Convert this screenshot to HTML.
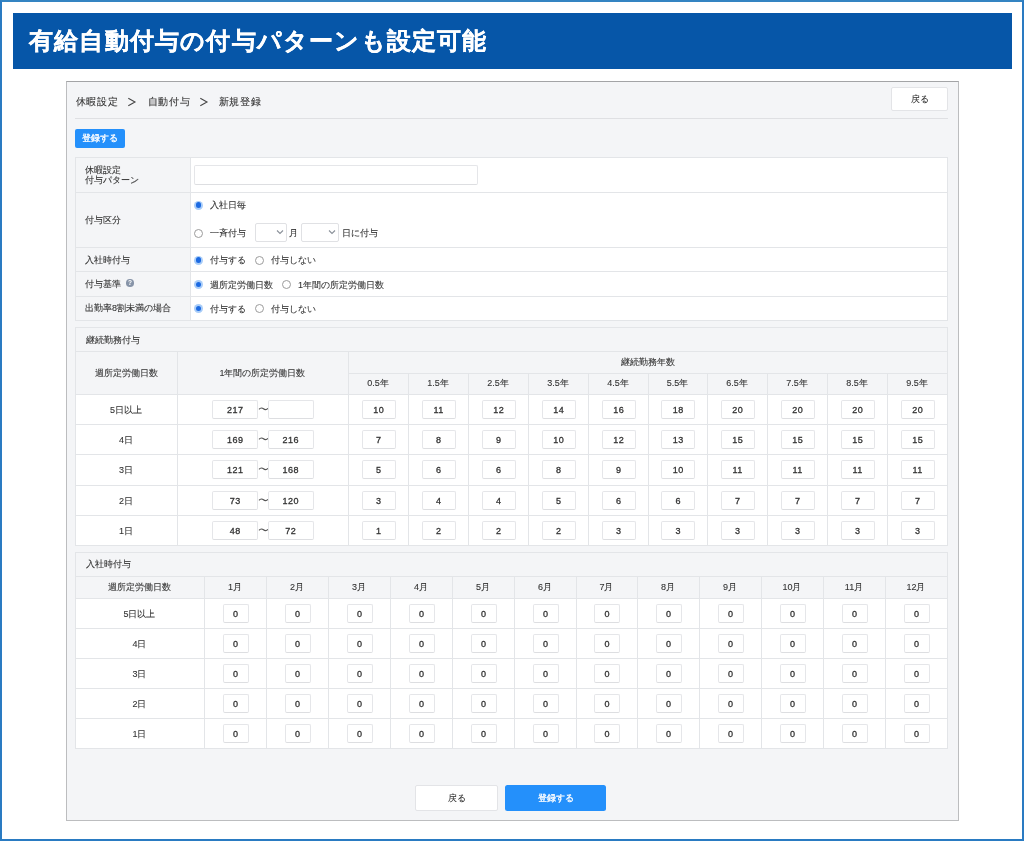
<!DOCTYPE html>
<html lang="ja"><head><meta charset="utf-8">
<style>
html,body{margin:0;padding:0;}
body{width:1024px;height:841px;position:relative;overflow:hidden;background:#fff;will-change:transform;font-family:"Liberation Sans",sans-serif;color:#333;}
.a{position:absolute;box-sizing:content-box;}
.t{white-space:nowrap;}
.inp{background:#fff;border:1px solid #e5e6e9;border-bottom-color:#dddee1;border-radius:2px;text-align:center;color:#333;letter-spacing:0.4px;text-indent:0.4px;-webkit-text-stroke:0.3px #333;}
.t{-webkit-text-stroke:0.1px currentColor;}
.rc{width:9px;height:9px;border-radius:50%;background:#a9cdf8;box-sizing:border-box;}
.rc:after{content:'';position:absolute;left:1.75px;top:1.75px;width:5.5px;height:5.5px;border-radius:50%;background:#1c6ae2;}
.ru{width:9px;height:9px;border-radius:50%;background:#fff;border:1px solid #9c9c9c;box-sizing:border-box;}
</style></head><body>

<div class="a" style="left:0;top:0;width:1024px;height:841px;box-sizing:border-box;border:2px solid #2a7bc2;border-top-color:#3484c2"></div>
<div class="a" style="left:13px;top:13px;width:999px;height:56px;background:#0656a8;border-radius:0px;"></div>
<div class="a t" style="left:29px;top:14px;width:600px;height:55px;line-height:55px;font-size:23.5px;font-weight:bold;color:#fff;text-align:left;-webkit-text-stroke:0.25px #fff;letter-spacing:1.2px">有給自動付与の付与パターンも設定可能</div>
<div class="a" style="left:66px;top:81px;width:891px;height:738px;background:#f4f5f7;border:1px solid #bcbdbf;border-radius:0px;border-top-color:#a3a4a6"></div>
<div class="a t" style="left:75.5px;top:92px;width:60px;height:20px;line-height:20px;font-size:9.7px;font-weight:normal;color:#333;text-align:left;letter-spacing:0.75px">休暇設定</div>
<svg class="a" style="left:127px;top:97px" width="10" height="10"><path d="M1.3 1.3 L8 5 L1.3 8.7" fill="none" stroke="#444" stroke-width="1.05"/></svg>
<div class="a t" style="left:147.5px;top:92px;width:60px;height:20px;line-height:20px;font-size:9.7px;font-weight:normal;color:#333;text-align:left;letter-spacing:0.75px">自動付与</div>
<svg class="a" style="left:199px;top:97px" width="10" height="10"><path d="M1.3 1.3 L8 5 L1.3 8.7" fill="none" stroke="#444" stroke-width="1.05"/></svg>
<div class="a t" style="left:218.5px;top:92px;width:60px;height:20px;line-height:20px;font-size:9.7px;font-weight:normal;color:#333;text-align:left;letter-spacing:0.75px">新規登録</div>
<div class="a" style="left:891px;top:87px;width:55px;height:22px;background:#fff;border:1px solid #e3e4e7;border-radius:2px;"></div>
<div class="a t" style="left:891px;top:87px;width:57px;height:24px;line-height:24px;font-size:9px;font-weight:normal;color:#333;text-align:center;">戻る</div>
<div class="a" style="left:75px;top:118px;width:873px;height:1px;background:#dfe0e3"></div>
<div class="a" style="left:75px;top:129px;width:50px;height:19px;background:#2490fb;border-radius:2px;"></div>
<div class="a t" style="left:75px;top:129px;width:50px;height:19px;line-height:19px;font-size:9px;font-weight:normal;color:#fff;text-align:center;-webkit-text-stroke:0.3px #fff">登録する</div>
<div class="a" style="left:75px;top:157px;width:872px;height:163px;background:#fff;border-radius:0px;"></div>
<div class="a" style="left:75px;top:157px;width:115px;height:163px;background:#f4f5f7;border-radius:0px;"></div>
<div class="a" style="left:75px;top:157px;width:873px;height:1px;background:#e3e5e8"></div>
<div class="a" style="left:75px;top:192px;width:873px;height:1px;background:#e3e5e8"></div>
<div class="a" style="left:75px;top:247px;width:873px;height:1px;background:#e3e5e8"></div>
<div class="a" style="left:75px;top:271px;width:873px;height:1px;background:#e3e5e8"></div>
<div class="a" style="left:75px;top:296px;width:873px;height:1px;background:#e3e5e8"></div>
<div class="a" style="left:75px;top:320px;width:873px;height:1px;background:#e3e5e8"></div>
<div class="a" style="left:75px;top:157px;width:1px;height:163px;background:#e3e5e8"></div>
<div class="a" style="left:947px;top:157px;width:1px;height:163px;background:#e3e5e8"></div>
<div class="a" style="left:190px;top:157px;width:1px;height:163px;background:#e3e5e8"></div>
<div class="a t" style="left:85px;top:165px;width:100px;height:10px;line-height:10px;font-size:9px;font-weight:normal;color:#333;text-align:left;">休暇設定</div>
<div class="a t" style="left:85px;top:175px;width:100px;height:10px;line-height:10px;font-size:9px;font-weight:normal;color:#333;text-align:left;">付与パターン</div>
<div class="a t" style="left:85px;top:214px;width:100px;height:12px;line-height:12px;font-size:9px;font-weight:normal;color:#333;text-align:left;">付与区分</div>
<div class="a t" style="left:85px;top:254px;width:100px;height:12px;line-height:12px;font-size:9px;font-weight:normal;color:#333;text-align:left;">入社時付与</div>
<div class="a t" style="left:85px;top:278px;width:100px;height:12px;line-height:12px;font-size:9px;font-weight:normal;color:#333;text-align:left;">付与基準</div>
<div class="a" style="left:126.3px;top:279.1px;width:7.6px;height:7.6px;border-radius:50%;background:#8794a8;color:#fff;font-size:6.5px;line-height:7.6px;text-align:center;font-weight:bold">?</div>
<div class="a t" style="left:85px;top:302px;width:120px;height:12px;line-height:12px;font-size:9px;font-weight:normal;color:#333;text-align:left;">出勤率8割未満の場合</div>
<div class="a inp" style="left:194px;top:165px;width:282px;height:18px;line-height:20px;font-size:9px"></div>
<div class="a rc" style="left:194.0px;top:200.5px"></div>
<div class="a t" style="left:210px;top:199px;width:60px;height:12px;line-height:12px;font-size:9px;font-weight:normal;color:#333;text-align:left;">入社日毎</div>
<div class="a ru" style="left:194.0px;top:228.5px"></div>
<div class="a t" style="left:210px;top:227px;width:60px;height:12px;line-height:12px;font-size:9px;font-weight:normal;color:#333;text-align:left;">一斉付与</div>
<div class="a" style="left:255px;top:223px;width:30px;height:17px;background:#fff;border:1px solid #e0e1e4;border-radius:2px;"></div>
<div class="a" style="left:301px;top:223px;width:36px;height:17px;background:#fff;border:1px solid #e0e1e4;border-radius:2px;"></div>
<svg class="a" style="left:276px;top:229px" width="8" height="6"><path d="M1 1.5 L4 4.5 L7 1.5" fill="none" stroke="#8a9099" stroke-width="1.1"/></svg>
<svg class="a" style="left:328px;top:229px" width="8" height="6"><path d="M1 1.5 L4 4.5 L7 1.5" fill="none" stroke="#8a9099" stroke-width="1.1"/></svg>
<div class="a t" style="left:289px;top:227px;width:12px;height:12px;line-height:12px;font-size:9px;font-weight:normal;color:#333;text-align:left;">月</div>
<div class="a t" style="left:342px;top:227px;width:50px;height:12px;line-height:12px;font-size:9px;font-weight:normal;color:#333;text-align:left;">日に付与</div>
<div class="a rc" style="left:194.0px;top:255.5px"></div>
<div class="a t" style="left:210px;top:254px;width:60px;height:12px;line-height:12px;font-size:9px;font-weight:normal;color:#333;text-align:left;">付与する</div>
<div class="a ru" style="left:255.0px;top:255.5px"></div>
<div class="a t" style="left:270.5px;top:254px;width:60px;height:12px;line-height:12px;font-size:9px;font-weight:normal;color:#333;text-align:left;">付与しない</div>
<div class="a rc" style="left:194.0px;top:280.0px"></div>
<div class="a t" style="left:210px;top:278.5px;width:80px;height:12px;line-height:12px;font-size:9px;font-weight:normal;color:#333;text-align:left;">週所定労働日数</div>
<div class="a ru" style="left:281.5px;top:280.0px"></div>
<div class="a t" style="left:298px;top:278.5px;width:100px;height:12px;line-height:12px;font-size:9px;font-weight:normal;color:#333;text-align:left;">1年間の所定労働日数</div>
<div class="a rc" style="left:194.0px;top:304.0px"></div>
<div class="a t" style="left:210px;top:302.5px;width:60px;height:12px;line-height:12px;font-size:9px;font-weight:normal;color:#333;text-align:left;">付与する</div>
<div class="a ru" style="left:255.0px;top:304.0px"></div>
<div class="a t" style="left:270.5px;top:302.5px;width:60px;height:12px;line-height:12px;font-size:9px;font-weight:normal;color:#333;text-align:left;">付与しない</div>
<div class="a" style="left:75px;top:327px;width:872px;height:218px;background:#fff;border-radius:0px;"></div>
<div class="a" style="left:75px;top:327px;width:872px;height:67px;background:#f4f5f7;border-radius:0px;"></div>
<div class="a" style="left:75px;top:327px;width:873px;height:1px;background:#e3e5e8"></div>
<div class="a" style="left:75px;top:351px;width:873px;height:1px;background:#e3e5e8"></div>
<div class="a" style="left:348px;top:373px;width:600px;height:1px;background:#e3e5e8"></div>
<div class="a" style="left:75px;top:394px;width:873px;height:1px;background:#e3e5e8"></div>
<div class="a" style="left:75px;top:424px;width:873px;height:1px;background:#e3e5e8"></div>
<div class="a" style="left:75px;top:454px;width:873px;height:1px;background:#e3e5e8"></div>
<div class="a" style="left:75px;top:485px;width:873px;height:1px;background:#e3e5e8"></div>
<div class="a" style="left:75px;top:515px;width:873px;height:1px;background:#e3e5e8"></div>
<div class="a" style="left:75px;top:545px;width:873px;height:1px;background:#e3e5e8"></div>
<div class="a" style="left:75px;top:327px;width:1px;height:218px;background:#e3e5e8"></div>
<div class="a" style="left:947px;top:327px;width:1px;height:218px;background:#e3e5e8"></div>
<div class="a" style="left:177px;top:351px;width:1px;height:194px;background:#e3e5e8"></div>
<div class="a" style="left:348px;top:351px;width:1px;height:194px;background:#e3e5e8"></div>
<div class="a" style="left:408px;top:373px;width:1px;height:172px;background:#e3e5e8"></div>
<div class="a" style="left:468px;top:373px;width:1px;height:172px;background:#e3e5e8"></div>
<div class="a" style="left:528px;top:373px;width:1px;height:172px;background:#e3e5e8"></div>
<div class="a" style="left:588px;top:373px;width:1px;height:172px;background:#e3e5e8"></div>
<div class="a" style="left:648px;top:373px;width:1px;height:172px;background:#e3e5e8"></div>
<div class="a" style="left:707px;top:373px;width:1px;height:172px;background:#e3e5e8"></div>
<div class="a" style="left:767px;top:373px;width:1px;height:172px;background:#e3e5e8"></div>
<div class="a" style="left:827px;top:373px;width:1px;height:172px;background:#e3e5e8"></div>
<div class="a" style="left:887px;top:373px;width:1px;height:172px;background:#e3e5e8"></div>
<div class="a t" style="left:86px;top:334px;width:100px;height:12px;line-height:12px;font-size:9px;font-weight:normal;color:#333;text-align:left;">継続勤務付与</div>
<div class="a t" style="left:75px;top:352px;width:102px;height:43px;line-height:43px;font-size:9px;font-weight:normal;color:#333;text-align:center;">週所定労働日数</div>
<div class="a t" style="left:177px;top:352px;width:171px;height:43px;line-height:43px;font-size:9px;font-weight:normal;color:#333;text-align:center;">1年間の所定労働日数</div>
<div class="a t" style="left:348px;top:351px;width:599px;height:22px;line-height:22px;font-size:9px;font-weight:normal;color:#333;text-align:center;">継続勤務年数</div>
<div class="a t" style="left:348px;top:373px;width:60px;height:21px;line-height:21px;font-size:9px;font-weight:normal;color:#333;text-align:center;">0.5年</div>
<div class="a t" style="left:408px;top:373px;width:60px;height:21px;line-height:21px;font-size:9px;font-weight:normal;color:#333;text-align:center;">1.5年</div>
<div class="a t" style="left:468px;top:373px;width:60px;height:21px;line-height:21px;font-size:9px;font-weight:normal;color:#333;text-align:center;">2.5年</div>
<div class="a t" style="left:528px;top:373px;width:60px;height:21px;line-height:21px;font-size:9px;font-weight:normal;color:#333;text-align:center;">3.5年</div>
<div class="a t" style="left:588px;top:373px;width:60px;height:21px;line-height:21px;font-size:9px;font-weight:normal;color:#333;text-align:center;">4.5年</div>
<div class="a t" style="left:648px;top:373px;width:59px;height:21px;line-height:21px;font-size:9px;font-weight:normal;color:#333;text-align:center;">5.5年</div>
<div class="a t" style="left:707px;top:373px;width:60px;height:21px;line-height:21px;font-size:9px;font-weight:normal;color:#333;text-align:center;">6.5年</div>
<div class="a t" style="left:767px;top:373px;width:60px;height:21px;line-height:21px;font-size:9px;font-weight:normal;color:#333;text-align:center;">7.5年</div>
<div class="a t" style="left:827px;top:373px;width:60px;height:21px;line-height:21px;font-size:9px;font-weight:normal;color:#333;text-align:center;">8.5年</div>
<div class="a t" style="left:887px;top:373px;width:60px;height:21px;line-height:21px;font-size:9px;font-weight:normal;color:#333;text-align:center;">9.5年</div>
<div class="a t" style="left:75px;top:395px;width:102px;height:30px;line-height:30px;font-size:9px;font-weight:normal;color:#333;text-align:center;">5日以上</div>
<div class="a inp" style="left:212px;top:400px;width:44px;height:17px;line-height:19px;font-size:9px">217</div>
<div class="a t" style="left:257.5px;top:393.5px;width:11px;height:30px;line-height:30px;font-size:10.5px;font-weight:normal;color:#555;text-align:center;-webkit-text-stroke:0">〜</div>
<div class="a inp" style="left:267.5px;top:400px;width:44px;height:17px;line-height:19px;font-size:9px"></div>
<div class="a inp" style="left:361.5px;top:400px;width:32px;height:17px;line-height:19px;font-size:9px">10</div>
<div class="a inp" style="left:421.5px;top:400px;width:32px;height:17px;line-height:19px;font-size:9px">11</div>
<div class="a inp" style="left:481.5px;top:400px;width:32px;height:17px;line-height:19px;font-size:9px">12</div>
<div class="a inp" style="left:541.5px;top:400px;width:32px;height:17px;line-height:19px;font-size:9px">14</div>
<div class="a inp" style="left:601.5px;top:400px;width:32px;height:17px;line-height:19px;font-size:9px">16</div>
<div class="a inp" style="left:661.0px;top:400px;width:32px;height:17px;line-height:19px;font-size:9px">18</div>
<div class="a inp" style="left:720.5px;top:400px;width:32px;height:17px;line-height:19px;font-size:9px">20</div>
<div class="a inp" style="left:780.5px;top:400px;width:32px;height:17px;line-height:19px;font-size:9px">20</div>
<div class="a inp" style="left:840.5px;top:400px;width:32px;height:17px;line-height:19px;font-size:9px">20</div>
<div class="a inp" style="left:900.5px;top:400px;width:32px;height:17px;line-height:19px;font-size:9px">20</div>
<div class="a t" style="left:75px;top:425px;width:102px;height:30px;line-height:30px;font-size:9px;font-weight:normal;color:#333;text-align:center;">4日</div>
<div class="a inp" style="left:212px;top:430px;width:44px;height:17px;line-height:19px;font-size:9px">169</div>
<div class="a t" style="left:257.5px;top:423.5px;width:11px;height:30px;line-height:30px;font-size:10.5px;font-weight:normal;color:#555;text-align:center;-webkit-text-stroke:0">〜</div>
<div class="a inp" style="left:267.5px;top:430px;width:44px;height:17px;line-height:19px;font-size:9px">216</div>
<div class="a inp" style="left:361.5px;top:430px;width:32px;height:17px;line-height:19px;font-size:9px">7</div>
<div class="a inp" style="left:421.5px;top:430px;width:32px;height:17px;line-height:19px;font-size:9px">8</div>
<div class="a inp" style="left:481.5px;top:430px;width:32px;height:17px;line-height:19px;font-size:9px">9</div>
<div class="a inp" style="left:541.5px;top:430px;width:32px;height:17px;line-height:19px;font-size:9px">10</div>
<div class="a inp" style="left:601.5px;top:430px;width:32px;height:17px;line-height:19px;font-size:9px">12</div>
<div class="a inp" style="left:661.0px;top:430px;width:32px;height:17px;line-height:19px;font-size:9px">13</div>
<div class="a inp" style="left:720.5px;top:430px;width:32px;height:17px;line-height:19px;font-size:9px">15</div>
<div class="a inp" style="left:780.5px;top:430px;width:32px;height:17px;line-height:19px;font-size:9px">15</div>
<div class="a inp" style="left:840.5px;top:430px;width:32px;height:17px;line-height:19px;font-size:9px">15</div>
<div class="a inp" style="left:900.5px;top:430px;width:32px;height:17px;line-height:19px;font-size:9px">15</div>
<div class="a t" style="left:75px;top:455px;width:102px;height:30px;line-height:30px;font-size:9px;font-weight:normal;color:#333;text-align:center;">3日</div>
<div class="a inp" style="left:212px;top:460px;width:44px;height:17px;line-height:19px;font-size:9px">121</div>
<div class="a t" style="left:257.5px;top:453.5px;width:11px;height:30px;line-height:30px;font-size:10.5px;font-weight:normal;color:#555;text-align:center;-webkit-text-stroke:0">〜</div>
<div class="a inp" style="left:267.5px;top:460px;width:44px;height:17px;line-height:19px;font-size:9px">168</div>
<div class="a inp" style="left:361.5px;top:460px;width:32px;height:17px;line-height:19px;font-size:9px">5</div>
<div class="a inp" style="left:421.5px;top:460px;width:32px;height:17px;line-height:19px;font-size:9px">6</div>
<div class="a inp" style="left:481.5px;top:460px;width:32px;height:17px;line-height:19px;font-size:9px">6</div>
<div class="a inp" style="left:541.5px;top:460px;width:32px;height:17px;line-height:19px;font-size:9px">8</div>
<div class="a inp" style="left:601.5px;top:460px;width:32px;height:17px;line-height:19px;font-size:9px">9</div>
<div class="a inp" style="left:661.0px;top:460px;width:32px;height:17px;line-height:19px;font-size:9px">10</div>
<div class="a inp" style="left:720.5px;top:460px;width:32px;height:17px;line-height:19px;font-size:9px">11</div>
<div class="a inp" style="left:780.5px;top:460px;width:32px;height:17px;line-height:19px;font-size:9px">11</div>
<div class="a inp" style="left:840.5px;top:460px;width:32px;height:17px;line-height:19px;font-size:9px">11</div>
<div class="a inp" style="left:900.5px;top:460px;width:32px;height:17px;line-height:19px;font-size:9px">11</div>
<div class="a t" style="left:75px;top:486px;width:102px;height:30px;line-height:30px;font-size:9px;font-weight:normal;color:#333;text-align:center;">2日</div>
<div class="a inp" style="left:212px;top:491px;width:44px;height:17px;line-height:19px;font-size:9px">73</div>
<div class="a t" style="left:257.5px;top:484.5px;width:11px;height:30px;line-height:30px;font-size:10.5px;font-weight:normal;color:#555;text-align:center;-webkit-text-stroke:0">〜</div>
<div class="a inp" style="left:267.5px;top:491px;width:44px;height:17px;line-height:19px;font-size:9px">120</div>
<div class="a inp" style="left:361.5px;top:491px;width:32px;height:17px;line-height:19px;font-size:9px">3</div>
<div class="a inp" style="left:421.5px;top:491px;width:32px;height:17px;line-height:19px;font-size:9px">4</div>
<div class="a inp" style="left:481.5px;top:491px;width:32px;height:17px;line-height:19px;font-size:9px">4</div>
<div class="a inp" style="left:541.5px;top:491px;width:32px;height:17px;line-height:19px;font-size:9px">5</div>
<div class="a inp" style="left:601.5px;top:491px;width:32px;height:17px;line-height:19px;font-size:9px">6</div>
<div class="a inp" style="left:661.0px;top:491px;width:32px;height:17px;line-height:19px;font-size:9px">6</div>
<div class="a inp" style="left:720.5px;top:491px;width:32px;height:17px;line-height:19px;font-size:9px">7</div>
<div class="a inp" style="left:780.5px;top:491px;width:32px;height:17px;line-height:19px;font-size:9px">7</div>
<div class="a inp" style="left:840.5px;top:491px;width:32px;height:17px;line-height:19px;font-size:9px">7</div>
<div class="a inp" style="left:900.5px;top:491px;width:32px;height:17px;line-height:19px;font-size:9px">7</div>
<div class="a t" style="left:75px;top:516px;width:102px;height:30px;line-height:30px;font-size:9px;font-weight:normal;color:#333;text-align:center;">1日</div>
<div class="a inp" style="left:212px;top:521px;width:44px;height:17px;line-height:19px;font-size:9px">48</div>
<div class="a t" style="left:257.5px;top:514.5px;width:11px;height:30px;line-height:30px;font-size:10.5px;font-weight:normal;color:#555;text-align:center;-webkit-text-stroke:0">〜</div>
<div class="a inp" style="left:267.5px;top:521px;width:44px;height:17px;line-height:19px;font-size:9px">72</div>
<div class="a inp" style="left:361.5px;top:521px;width:32px;height:17px;line-height:19px;font-size:9px">1</div>
<div class="a inp" style="left:421.5px;top:521px;width:32px;height:17px;line-height:19px;font-size:9px">2</div>
<div class="a inp" style="left:481.5px;top:521px;width:32px;height:17px;line-height:19px;font-size:9px">2</div>
<div class="a inp" style="left:541.5px;top:521px;width:32px;height:17px;line-height:19px;font-size:9px">2</div>
<div class="a inp" style="left:601.5px;top:521px;width:32px;height:17px;line-height:19px;font-size:9px">3</div>
<div class="a inp" style="left:661.0px;top:521px;width:32px;height:17px;line-height:19px;font-size:9px">3</div>
<div class="a inp" style="left:720.5px;top:521px;width:32px;height:17px;line-height:19px;font-size:9px">3</div>
<div class="a inp" style="left:780.5px;top:521px;width:32px;height:17px;line-height:19px;font-size:9px">3</div>
<div class="a inp" style="left:840.5px;top:521px;width:32px;height:17px;line-height:19px;font-size:9px">3</div>
<div class="a inp" style="left:900.5px;top:521px;width:32px;height:17px;line-height:19px;font-size:9px">3</div>
<div class="a" style="left:75px;top:552px;width:872px;height:196px;background:#fff;border-radius:0px;"></div>
<div class="a" style="left:75px;top:552px;width:872px;height:46px;background:#f4f5f7;border-radius:0px;"></div>
<div class="a" style="left:75px;top:552px;width:873px;height:1px;background:#e3e5e8"></div>
<div class="a" style="left:75px;top:576px;width:873px;height:1px;background:#e3e5e8"></div>
<div class="a" style="left:75px;top:598px;width:873px;height:1px;background:#e3e5e8"></div>
<div class="a" style="left:75px;top:628px;width:873px;height:1px;background:#e3e5e8"></div>
<div class="a" style="left:75px;top:658px;width:873px;height:1px;background:#e3e5e8"></div>
<div class="a" style="left:75px;top:688px;width:873px;height:1px;background:#e3e5e8"></div>
<div class="a" style="left:75px;top:718px;width:873px;height:1px;background:#e3e5e8"></div>
<div class="a" style="left:75px;top:748px;width:873px;height:1px;background:#e3e5e8"></div>
<div class="a" style="left:75px;top:552px;width:1px;height:196px;background:#e3e5e8"></div>
<div class="a" style="left:947px;top:552px;width:1px;height:196px;background:#e3e5e8"></div>
<div class="a" style="left:204px;top:576px;width:1px;height:172px;background:#e3e5e8"></div>
<div class="a" style="left:266px;top:576px;width:1px;height:172px;background:#e3e5e8"></div>
<div class="a" style="left:328px;top:576px;width:1px;height:172px;background:#e3e5e8"></div>
<div class="a" style="left:390px;top:576px;width:1px;height:172px;background:#e3e5e8"></div>
<div class="a" style="left:452px;top:576px;width:1px;height:172px;background:#e3e5e8"></div>
<div class="a" style="left:514px;top:576px;width:1px;height:172px;background:#e3e5e8"></div>
<div class="a" style="left:576px;top:576px;width:1px;height:172px;background:#e3e5e8"></div>
<div class="a" style="left:637px;top:576px;width:1px;height:172px;background:#e3e5e8"></div>
<div class="a" style="left:699px;top:576px;width:1px;height:172px;background:#e3e5e8"></div>
<div class="a" style="left:761px;top:576px;width:1px;height:172px;background:#e3e5e8"></div>
<div class="a" style="left:823px;top:576px;width:1px;height:172px;background:#e3e5e8"></div>
<div class="a" style="left:885px;top:576px;width:1px;height:172px;background:#e3e5e8"></div>
<div class="a t" style="left:86px;top:558px;width:100px;height:12px;line-height:12px;font-size:9px;font-weight:normal;color:#333;text-align:left;">入社時付与</div>
<div class="a t" style="left:75px;top:576px;width:129px;height:22px;line-height:22px;font-size:9px;font-weight:normal;color:#333;text-align:center;">週所定労働日数</div>
<div class="a t" style="left:204px;top:576px;width:62px;height:22px;line-height:22px;font-size:9px;font-weight:normal;color:#333;text-align:center;">1月</div>
<div class="a t" style="left:266px;top:576px;width:62px;height:22px;line-height:22px;font-size:9px;font-weight:normal;color:#333;text-align:center;">2月</div>
<div class="a t" style="left:328px;top:576px;width:62px;height:22px;line-height:22px;font-size:9px;font-weight:normal;color:#333;text-align:center;">3月</div>
<div class="a t" style="left:390px;top:576px;width:62px;height:22px;line-height:22px;font-size:9px;font-weight:normal;color:#333;text-align:center;">4月</div>
<div class="a t" style="left:452px;top:576px;width:62px;height:22px;line-height:22px;font-size:9px;font-weight:normal;color:#333;text-align:center;">5月</div>
<div class="a t" style="left:514px;top:576px;width:62px;height:22px;line-height:22px;font-size:9px;font-weight:normal;color:#333;text-align:center;">6月</div>
<div class="a t" style="left:576px;top:576px;width:61px;height:22px;line-height:22px;font-size:9px;font-weight:normal;color:#333;text-align:center;">7月</div>
<div class="a t" style="left:637px;top:576px;width:62px;height:22px;line-height:22px;font-size:9px;font-weight:normal;color:#333;text-align:center;">8月</div>
<div class="a t" style="left:699px;top:576px;width:62px;height:22px;line-height:22px;font-size:9px;font-weight:normal;color:#333;text-align:center;">9月</div>
<div class="a t" style="left:761px;top:576px;width:62px;height:22px;line-height:22px;font-size:9px;font-weight:normal;color:#333;text-align:center;">10月</div>
<div class="a t" style="left:823px;top:576px;width:62px;height:22px;line-height:22px;font-size:9px;font-weight:normal;color:#333;text-align:center;">11月</div>
<div class="a t" style="left:885px;top:576px;width:62px;height:22px;line-height:22px;font-size:9px;font-weight:normal;color:#333;text-align:center;">12月</div>
<div class="a t" style="left:75px;top:599px;width:129px;height:30px;line-height:30px;font-size:9px;font-weight:normal;color:#333;text-align:center;">5日以上</div>
<div class="a inp" style="left:222.5px;top:604px;width:24px;height:17px;line-height:19px;font-size:9px">0</div>
<div class="a inp" style="left:284.5px;top:604px;width:24px;height:17px;line-height:19px;font-size:9px">0</div>
<div class="a inp" style="left:346.5px;top:604px;width:24px;height:17px;line-height:19px;font-size:9px">0</div>
<div class="a inp" style="left:408.5px;top:604px;width:24px;height:17px;line-height:19px;font-size:9px">0</div>
<div class="a inp" style="left:470.5px;top:604px;width:24px;height:17px;line-height:19px;font-size:9px">0</div>
<div class="a inp" style="left:532.5px;top:604px;width:24px;height:17px;line-height:19px;font-size:9px">0</div>
<div class="a inp" style="left:594.0px;top:604px;width:24px;height:17px;line-height:19px;font-size:9px">0</div>
<div class="a inp" style="left:655.5px;top:604px;width:24px;height:17px;line-height:19px;font-size:9px">0</div>
<div class="a inp" style="left:717.5px;top:604px;width:24px;height:17px;line-height:19px;font-size:9px">0</div>
<div class="a inp" style="left:779.5px;top:604px;width:24px;height:17px;line-height:19px;font-size:9px">0</div>
<div class="a inp" style="left:841.5px;top:604px;width:24px;height:17px;line-height:19px;font-size:9px">0</div>
<div class="a inp" style="left:903.5px;top:604px;width:24px;height:17px;line-height:19px;font-size:9px">0</div>
<div class="a t" style="left:75px;top:629px;width:129px;height:30px;line-height:30px;font-size:9px;font-weight:normal;color:#333;text-align:center;">4日</div>
<div class="a inp" style="left:222.5px;top:634px;width:24px;height:17px;line-height:19px;font-size:9px">0</div>
<div class="a inp" style="left:284.5px;top:634px;width:24px;height:17px;line-height:19px;font-size:9px">0</div>
<div class="a inp" style="left:346.5px;top:634px;width:24px;height:17px;line-height:19px;font-size:9px">0</div>
<div class="a inp" style="left:408.5px;top:634px;width:24px;height:17px;line-height:19px;font-size:9px">0</div>
<div class="a inp" style="left:470.5px;top:634px;width:24px;height:17px;line-height:19px;font-size:9px">0</div>
<div class="a inp" style="left:532.5px;top:634px;width:24px;height:17px;line-height:19px;font-size:9px">0</div>
<div class="a inp" style="left:594.0px;top:634px;width:24px;height:17px;line-height:19px;font-size:9px">0</div>
<div class="a inp" style="left:655.5px;top:634px;width:24px;height:17px;line-height:19px;font-size:9px">0</div>
<div class="a inp" style="left:717.5px;top:634px;width:24px;height:17px;line-height:19px;font-size:9px">0</div>
<div class="a inp" style="left:779.5px;top:634px;width:24px;height:17px;line-height:19px;font-size:9px">0</div>
<div class="a inp" style="left:841.5px;top:634px;width:24px;height:17px;line-height:19px;font-size:9px">0</div>
<div class="a inp" style="left:903.5px;top:634px;width:24px;height:17px;line-height:19px;font-size:9px">0</div>
<div class="a t" style="left:75px;top:659px;width:129px;height:30px;line-height:30px;font-size:9px;font-weight:normal;color:#333;text-align:center;">3日</div>
<div class="a inp" style="left:222.5px;top:664px;width:24px;height:17px;line-height:19px;font-size:9px">0</div>
<div class="a inp" style="left:284.5px;top:664px;width:24px;height:17px;line-height:19px;font-size:9px">0</div>
<div class="a inp" style="left:346.5px;top:664px;width:24px;height:17px;line-height:19px;font-size:9px">0</div>
<div class="a inp" style="left:408.5px;top:664px;width:24px;height:17px;line-height:19px;font-size:9px">0</div>
<div class="a inp" style="left:470.5px;top:664px;width:24px;height:17px;line-height:19px;font-size:9px">0</div>
<div class="a inp" style="left:532.5px;top:664px;width:24px;height:17px;line-height:19px;font-size:9px">0</div>
<div class="a inp" style="left:594.0px;top:664px;width:24px;height:17px;line-height:19px;font-size:9px">0</div>
<div class="a inp" style="left:655.5px;top:664px;width:24px;height:17px;line-height:19px;font-size:9px">0</div>
<div class="a inp" style="left:717.5px;top:664px;width:24px;height:17px;line-height:19px;font-size:9px">0</div>
<div class="a inp" style="left:779.5px;top:664px;width:24px;height:17px;line-height:19px;font-size:9px">0</div>
<div class="a inp" style="left:841.5px;top:664px;width:24px;height:17px;line-height:19px;font-size:9px">0</div>
<div class="a inp" style="left:903.5px;top:664px;width:24px;height:17px;line-height:19px;font-size:9px">0</div>
<div class="a t" style="left:75px;top:689px;width:129px;height:30px;line-height:30px;font-size:9px;font-weight:normal;color:#333;text-align:center;">2日</div>
<div class="a inp" style="left:222.5px;top:694px;width:24px;height:17px;line-height:19px;font-size:9px">0</div>
<div class="a inp" style="left:284.5px;top:694px;width:24px;height:17px;line-height:19px;font-size:9px">0</div>
<div class="a inp" style="left:346.5px;top:694px;width:24px;height:17px;line-height:19px;font-size:9px">0</div>
<div class="a inp" style="left:408.5px;top:694px;width:24px;height:17px;line-height:19px;font-size:9px">0</div>
<div class="a inp" style="left:470.5px;top:694px;width:24px;height:17px;line-height:19px;font-size:9px">0</div>
<div class="a inp" style="left:532.5px;top:694px;width:24px;height:17px;line-height:19px;font-size:9px">0</div>
<div class="a inp" style="left:594.0px;top:694px;width:24px;height:17px;line-height:19px;font-size:9px">0</div>
<div class="a inp" style="left:655.5px;top:694px;width:24px;height:17px;line-height:19px;font-size:9px">0</div>
<div class="a inp" style="left:717.5px;top:694px;width:24px;height:17px;line-height:19px;font-size:9px">0</div>
<div class="a inp" style="left:779.5px;top:694px;width:24px;height:17px;line-height:19px;font-size:9px">0</div>
<div class="a inp" style="left:841.5px;top:694px;width:24px;height:17px;line-height:19px;font-size:9px">0</div>
<div class="a inp" style="left:903.5px;top:694px;width:24px;height:17px;line-height:19px;font-size:9px">0</div>
<div class="a t" style="left:75px;top:719px;width:129px;height:30px;line-height:30px;font-size:9px;font-weight:normal;color:#333;text-align:center;">1日</div>
<div class="a inp" style="left:222.5px;top:724px;width:24px;height:17px;line-height:19px;font-size:9px">0</div>
<div class="a inp" style="left:284.5px;top:724px;width:24px;height:17px;line-height:19px;font-size:9px">0</div>
<div class="a inp" style="left:346.5px;top:724px;width:24px;height:17px;line-height:19px;font-size:9px">0</div>
<div class="a inp" style="left:408.5px;top:724px;width:24px;height:17px;line-height:19px;font-size:9px">0</div>
<div class="a inp" style="left:470.5px;top:724px;width:24px;height:17px;line-height:19px;font-size:9px">0</div>
<div class="a inp" style="left:532.5px;top:724px;width:24px;height:17px;line-height:19px;font-size:9px">0</div>
<div class="a inp" style="left:594.0px;top:724px;width:24px;height:17px;line-height:19px;font-size:9px">0</div>
<div class="a inp" style="left:655.5px;top:724px;width:24px;height:17px;line-height:19px;font-size:9px">0</div>
<div class="a inp" style="left:717.5px;top:724px;width:24px;height:17px;line-height:19px;font-size:9px">0</div>
<div class="a inp" style="left:779.5px;top:724px;width:24px;height:17px;line-height:19px;font-size:9px">0</div>
<div class="a inp" style="left:841.5px;top:724px;width:24px;height:17px;line-height:19px;font-size:9px">0</div>
<div class="a inp" style="left:903.5px;top:724px;width:24px;height:17px;line-height:19px;font-size:9px">0</div>
<div class="a" style="left:415px;top:785px;width:81px;height:24px;background:#fff;border:1px solid #e3e4e7;border-radius:2px;"></div>
<div class="a t" style="left:415px;top:785px;width:83px;height:26px;line-height:26px;font-size:9px;font-weight:normal;color:#333;text-align:center;">戻る</div>
<div class="a" style="left:505px;top:785px;width:101px;height:26px;background:#2490fb;border-radius:2.5px;"></div>
<div class="a t" style="left:505px;top:785px;width:101px;height:26px;line-height:26px;font-size:9px;font-weight:normal;color:#fff;text-align:center;-webkit-text-stroke:0.3px #fff">登録する</div>
</body></html>
